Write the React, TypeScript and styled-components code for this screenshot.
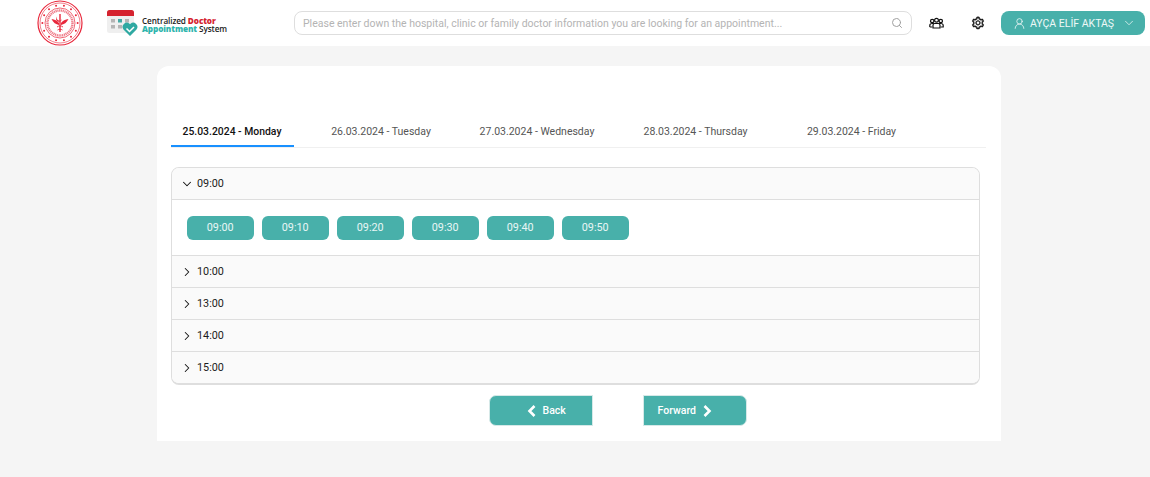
import React from 'react';
import styled, { createGlobalStyle } from 'styled-components';
import { ChevronDown, ChevronRight, Search, UserRound } from 'lucide-react';
import { AiOutlineSetting } from 'react-icons/ai';

const Global = createGlobalStyle`
  html, body { margin: 0; padding: 0; background: #f5f5f5; }
  body { font-family: Roboto, "Liberation Sans", sans-serif; }
`;

const Page = styled.div`
  width: 1150px;
  height: 477px;
  overflow: hidden;
  background: #f5f5f5;
`;

const Header = styled.header`
  height: 46px;
  background: #fff;
  display: flex;
  align-items: center;
`;

const Emblem = styled.svg`
  width: 46px;
  height: 46px;
  margin-left: 37px;
  flex: none;
`;

const Brand = styled.div`
  margin-left: 24px;
  width: 121px;
  display: flex;
  align-items: center;
  gap: 3px;
  flex: none;
`;

const BrandText = styled.div`
  font-family: "Open Sans", sans-serif;
  font-size: 8.2px;
  font-weight: 600;
  color: #222;
  white-space: nowrap;
  margin-top: 3px;
  letter-spacing: -0.1px;
`;

const BrandLine = styled.div`
  height: 8px;
  line-height: 8px;
`;

const Accent = styled.span<{ $color: string }>`
  color: ${({ $color }) => $color};
  font-weight: 800;
`;

const SearchBox = styled.div`
  margin-left: 66px;
  width: 618px;
  height: 24px;
  box-sizing: border-box;
  border: 1px solid #dedede;
  border-radius: 8px;
  background: #fff;
  display: flex;
  align-items: center;
  justify-content: space-between;
  padding: 0 8px;
  font-size: 10.5px;
  color: #b4b4b4;
  flex: none;
  svg { color: #a0a0a0; }
`;

const IconSlot = styled.div<{ $left: number }>`
  margin-left: ${({ $left }) => $left}px;
  display: flex;
  flex: none;
`;

const UserButton = styled.div`
  margin-left: 16px;
  width: 144px;
  height: 24px;
  box-sizing: border-box;
  padding: 0 9px 0 12px;
  border-radius: 8px;
  background: #48b0aa;
  color: #eef8f7;
  font-size: 10.5px;
  display: flex;
  align-items: center;
  gap: 4px;
  flex: none;
  span { flex: 1; white-space: nowrap; }
`;

const Card = styled.main`
  width: 844px;
  height: 375px;
  margin: 20px 0 0 157px;
  padding: 46px 15px 0 13.5px;
  box-sizing: border-box;
  background: #fff;
  border-radius: 12px 12px 0 0;
`;

const Tabs = styled.div`
  height: 35px;
  display: flex;
  border-bottom: 1px solid #f0f0f0;
`;

const Tab = styled.div<{ $active?: boolean; $width: number }>`
  width: ${({ $width }) => $width}px;
  height: 35px;
  box-sizing: border-box;
  padding-top: 13px;
  text-align: center;
  font-size: ${({ $active }) => ($active ? 10.4 : 10.5)}px;
  line-height: 14px;
  white-space: nowrap;
  font-weight: ${({ $active }) => ($active ? 500 : 400)};
  color: ${({ $active }) => ($active ? '#111' : '#555')};
  border-bottom: ${({ $active }) => ($active ? '2px solid #1890ff' : 'none')};
`;

const Accordion = styled.div`
  width: 809px;
  margin-top: 19px;
  box-sizing: border-box;
  border: 1px solid #dedede;
  border-bottom-width: 2px;
  border-radius: 8px;
  overflow: hidden;
`;

const PanelHead = styled.div<{ $first?: boolean }>`
  height: 31px;
  box-sizing: content-box;
  background: #fafafa;
  border-top: ${({ $first }) => ($first ? 'none' : '1px solid #dedede')};
  display: flex;
  align-items: center;
  gap: 3.5px;
  padding-left: 8px;
  font-size: 10.8px;
  color: #1c1c1c;
`;

const PanelBody = styled.div`
  height: 56px;
  box-sizing: border-box;
  border-top: 1px solid #dedede;
  padding: 16px 15px 0;
  display: flex;
  gap: 7.5px;
  background: #fff;
`;

const Slot = styled.div`
  width: 67.5px;
  height: 23.5px;
  border-radius: 6px;
  background: #48b0aa;
  color: #e8f6f5;
  font-size: 10.8px;
  display: flex;
  align-items: center;
  justify-content: center;
`;

const Nav = styled.div`
  display: flex;
  gap: 50px;
  margin-top: 10px;
  padding-left: 318px;
`;

const NavButton = styled.div<{ $side: 'left' | 'right' }>`
  width: 104px;
  height: 31px;
  box-sizing: border-box;
  background: #48b0aa;
  border: 1px solid #d6e9e8;
  border-radius: ${({ $side }) => ($side === 'left' ? '7px 0 0 7px' : '0 7px 7px 0')};
  color: #fff;
  font-size: 10.5px;
  font-weight: 500;
  display: flex;
  align-items: center;
  gap: 7px;
  padding-left: ${({ $side }) => ($side === 'left' ? 37 : 14)}px;
`;

const times = ['09:00', '09:10', '09:20', '09:30', '09:40', '09:50'];
const hours = ['10:00', '13:00', '14:00', '15:00'];
const days = [
  { label: '25.03.2024 - Monday', width: 123 },
  { label: '26.03.2024 - Tuesday', width: 175 },
  { label: '27.03.2024 - Wednesday', width: 137 },
  { label: '28.03.2024 - Thursday', width: 180 },
  { label: '29.03.2024 - Friday', width: 132 },
];

const stars = Array.from({ length: 14 }, (_, i) => {
  const a = (i / 14) * Math.PI * 2;
  return { x: 23 + Math.cos(a) * 17.6, y: 23 + Math.sin(a) * 17.6 };
});

const MinistryEmblem = () => (
  <Emblem viewBox="0 0 46 46">
    <circle cx="23" cy="23" r="22" fill="none" stroke="#e8283c" strokeWidth="1.2" />
    <circle cx="23" cy="23" r="20" fill="none" stroke="#e8283c" strokeWidth=".6" />
    <circle cx="23" cy="23" r="15" fill="none" stroke="#e8283c" strokeWidth=".7" />
    <circle cx="23" cy="23" r="12.500" fill="none" stroke="#ee7c89" strokeWidth="2.400" strokeDasharray="1.200 .6" />
    {stars.map((s, i) => (
      <circle key={i} cx={s.x} cy={s.y} r="1" fill="#e8283c" />
    ))}
    <path d="M23 14v18" stroke="#e8283c" strokeWidth="1.400" />
    <path d="M14.500 19c3 .5 6 1.500 7.500 4v2c-3-.5-6-2.500-7.500-6zM31.500 19c-3 .5-6 1.500-7.500 4v2c3-.5 6-2.500 7.500-6z" fill="#e8283c" />
    <path d="M20 27c2-1.500 4-1.500 6 0M20.500 30c1.500-1 3.500-1 5 0" stroke="#e8283c" fill="none" strokeWidth=".9" />
    <path d="M20 16.500a3 3 0 1 0 5 2.500 2.600 2.600 0 0 1-5-2.500z" fill="#e8283c" />
  </Emblem>
);

const CalendarLogo = () => (
  <svg width="32" height="28" viewBox="0 0 32 28" style={{ flex: 'none' }}>
    <rect x="0" y="1" width="27" height="23" rx="2.500" fill="#efefef" />
    <path d="M0 7V3.500A2.500 2.500 0 0 1 2.500 1h22A2.500 2.500 0 0 1 27 3.500V7z" fill="#d5232f" />
    <rect x="4" y="10" width="4" height="3.500" fill="#b5b5b5" />
    <rect x="11" y="10" width="4" height="3.500" fill="#44aaa5" />
    <rect x="18" y="10" width="4" height="3.500" fill="#b5b5b5" />
    <rect x="4" y="16" width="4" height="3.500" fill="#b5b5b5" />
    <rect x="11" y="16" width="4" height="3.500" fill="#b5b5b5" />
    <path d="M23 27l-6.500-6.500a4.200 4.200 0 0 1 6-5.800l.5.500.5-.5a4.200 4.200 0 0 1 6 5.800z" fill="#2fa9a2" />
    <path d="M19.500 19.500l3 3 4.500-4.500" fill="none" stroke="#fff" strokeWidth="1.500" />
  </svg>
);

const PeopleIcon = () => (
  <svg width="15" height="13" viewBox="0 0 15 13" fill="#fff" stroke="#111" strokeWidth="1.200">
    <circle cx="3.200" cy="4" r="1.700" />
    <circle cx="11.800" cy="4" r="1.700" />
    <path d="M.8 10V8.500C.8 7.200 1.800 6.500 3.200 6.500h8.600c1.400 0 2.400.7 2.400 2V10h-2.500M3.300 10H.8" />
    <circle cx="7.500" cy="3.300" r="1.900" />
    <path d="M4 11V8.200c0-1 .8-1.700 1.800-1.700h3.400c1 0 1.800.7 1.800 1.700V11z" />
  </svg>
);

const BoldChevron = ({ dir }: { dir: 'left' | 'right' }) => (
  <svg width="9" height="12" viewBox="0 0 9 12" fill="none" stroke="#fff" strokeWidth="2.600">
    <path d={dir === 'left' ? 'M7.500 1L2.500 6l5 5' : 'M1.500 1l5 5-5 5'} />
  </svg>
);

export default function App() {
  return (
    <Page>
      <Global />
      <Header>
        <MinistryEmblem />
        <Brand>
          <CalendarLogo />
          <BrandText>
            <BrandLine>
              Centralized <Accent $color="#d5232f">Doctor</Accent>
            </BrandLine>
            <BrandLine>
              <Accent $color="#2fb5ad">Appointment</Accent> System
            </BrandLine>
          </BrandText>
        </Brand>
        <SearchBox>
          Please enter down the hospital, clinic or family doctor information you are looking for an appointment...
          <Search size={12} />
        </SearchBox>
        <IconSlot $left={17}>
          <PeopleIcon />
        </IconSlot>
        <IconSlot $left={27}>
          <AiOutlineSetting size={14} color="#111" style={{ strokeWidth: 30, stroke: '#111' }} />
        </IconSlot>
        <UserButton>
          <UserRound size={13} strokeWidth={1.5} />
          <span>AYÇA ELİF AKTAŞ</span>
          <ChevronDown size={14} strokeWidth={1.3} />
        </UserButton>
      </Header>
      <Card>
        <Tabs>
          {days.map((d, i) => (
            <Tab key={d.label} $active={i === 0} $width={d.width}>
              {d.label}
            </Tab>
          ))}
        </Tabs>
        <Accordion>
          <PanelHead $first>
            <ChevronDown size={14} strokeWidth={1.8} color="#111" />
            09:00
          </PanelHead>
          <PanelBody>
            {times.map((t) => (
              <Slot key={t}>{t}</Slot>
            ))}
          </PanelBody>
          {hours.map((h) => (
            <PanelHead key={h}>
              <ChevronRight size={14} strokeWidth={1.8} color="#111" />
              {h}
            </PanelHead>
          ))}
        </Accordion>
        <Nav>
          <NavButton $side="left">
            <BoldChevron dir="left" />
            Back
          </NavButton>
          <NavButton $side="right">
            Forward
            <BoldChevron dir="right" />
          </NavButton>
        </Nav>
      </Card>
    </Page>
  );
}
